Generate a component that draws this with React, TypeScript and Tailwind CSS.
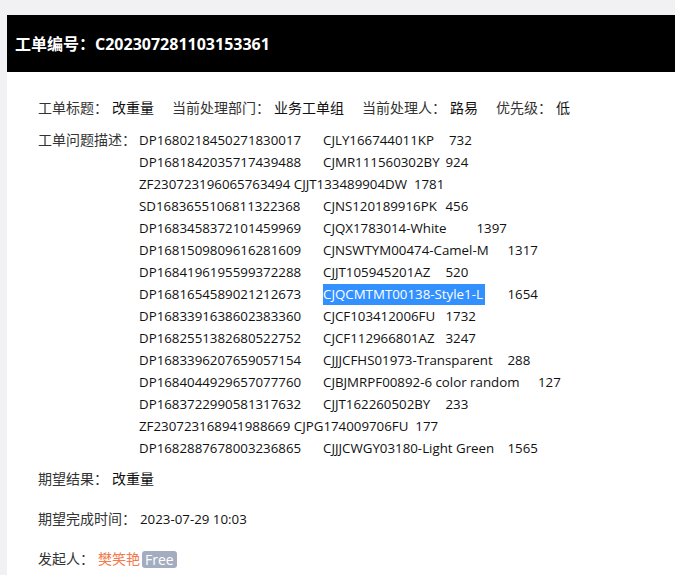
import React from "react";

type Row =
  | { kind: "dp"; a: string; b: string; c: string; w: number; hl?: boolean }
  | { kind: "zf"; text: string };

const rows: Row[] = [
  { kind: "dp", a: "DP1680218450271830017", b: "CJLY166744011KP", c: "732", w: 126 },
  { kind: "dp", a: "DP1681842035717439488", b: "CJMR111560302BY", c: "924", w: 122.5 },
  { kind: "zf", text: "ZF230723196065763494 CJJT133489904DW  1781" },
  { kind: "dp", a: "SD1683655106811322368", b: "CJNS120189916PK", c: "456", w: 122.5 },
  { kind: "dp", a: "DP1683458372101459969", b: "CJQX1783014-White", c: "1397", w: 153.5 },
  { kind: "dp", a: "DP1681509809616281609", b: "CJNSWTYM00474-Camel-M", c: "1317", w: 184.5 },
  { kind: "dp", a: "DP1684196195599372288", b: "CJJT105945201AZ", c: "520", w: 122.5 },
  { kind: "dp", a: "DP1681654589021212673", b: "CJQCMTMT00138-Style1-L", c: "1654", w: 184.5, hl: true },
  { kind: "dp", a: "DP1683391638602383360", b: "CJCF103412006FU", c: "1732", w: 122.5 },
  { kind: "dp", a: "DP1682551382680522752", b: "CJCF112966801AZ", c: "3247", w: 122.5 },
  { kind: "dp", a: "DP1683396207659057154", b: "CJJJCFHS01973-Transparent", c: "288", w: 184.5 },
  { kind: "dp", a: "DP1684044929657077760", b: "CJBJMRPF00892-6 color random", c: "127", w: 215 },
  { kind: "dp", a: "DP1683722990581317632", b: "CJJT162260502BY", c: "233", w: 122.5 },
  { kind: "zf", text: "ZF230723168941988669 CJPG174009706FU  177" },
  { kind: "dp", a: "DP1682887678003236865", b: "CJJJCWGY03180-Light Green", c: "1565", w: 184.5 },
];

const latin = "font-['Open_Sans','Noto_Sans_CJK_SC',sans-serif] text-[13.3px]";

function Label({ children }: { children: React.ReactNode }) {
  return <span className="text-[#333] whitespace-nowrap">{children}</span>;
}

function Item({ label, value, cls = "" }: { label: string; value: React.ReactNode; cls?: string }) {
  return (
    <div className={"flex items-center h-[22px] " + cls}>
      <Label>{label}</Label>
      <span className="ml-[4px] text-[#111] whitespace-nowrap">{value}</span>
    </div>
  );
}

export default function App() {
  return (
    <div className="min-h-[575px] bg-[#f1f1f3] pt-[15px] pl-[7px] font-['Open_Sans','Noto_Sans_CJK_SC',sans-serif] text-[14px] leading-[22px] overflow-hidden">
      <div className="bg-white min-h-[560px]">
        <div className="h-[57px] bg-black flex items-center pl-[8px] text-white font-bold text-[16px] whitespace-nowrap">
          工单编号：C202307281103153361
        </div>
        <div className="pl-[31px] pt-[25px]">
          <div className="flex items-center gap-[18px]">
            <Item label="工单标题：" value="改重量" />
            <Item label="当前处理部门：" value="业务工单组" />
            <Item label="当前处理人：" value="路易" />
            <Item label="优先级：" value="低" />
          </div>
          <div className="flex mt-[10px]">
            <div className="h-[22px] flex items-center">
              <Label>工单问题描述：</Label>
            </div>
            <div className={"ml-[3px] text-[#111] " + latin}>
              {rows.map((r, i) =>
                r.kind === "zf" ? (
                  <div key={i} className="h-[22px] leading-[22px] whitespace-pre">
                    {r.text}
                  </div>
                ) : (
                  <div key={i} className="h-[22px] leading-[22px] flex whitespace-pre">
                    <span className="w-[184px] shrink-0">{r.a}</span>
                    <span className="shrink-0" style={{ width: r.w }}>
                      {r.hl ? (
                        <span className="inline-block h-[21px] leading-[21px] bg-[#3390ff] text-white pr-[2px]">
                          {r.b}
                        </span>
                      ) : (
                        r.b
                      )}
                    </span>
                    <span>{r.c}</span>
                  </div>
                )
              )}
            </div>
          </div>
          <Item label="期望结果：" value="改重量" cls="mt-[9px]" />
          <Item
            label="期望完成时间："
            value={<span className={latin}>2023-07-29 10:03</span>}
            cls="mt-[18px]"
          />
          <div className="flex items-center h-[22px] mt-[18px]">
            <Label>发起人：</Label>
            <span className="ml-[4px] text-[#f27a4c]">樊笑艳</span>
            <span
              className={
                "ml-[2px] h-[17px] leading-[17px] px-[3px] rounded-[3px] bg-[#a4adc0] text-white " +
                "font-['Open_Sans',sans-serif] text-[14px]"
              }
            >
              Free
            </span>
          </div>
        </div>
      </div>
    </div>
  );
}
